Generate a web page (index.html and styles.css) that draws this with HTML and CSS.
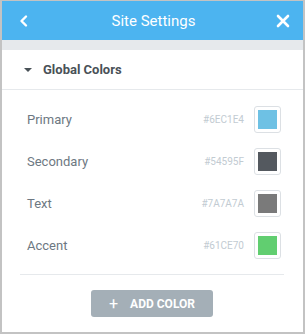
FILE: index.html
```html
<!DOCTYPE html>
<html lang="en">
<head>
	<meta charset="UTF-8">
	<title>Site Settings</title>
	<link rel="stylesheet" href="styles.css">
</head>
<body>
	<main class="panel">
		<header class="top">
			<svg class="ico" width="14" height="14" viewBox="0 0 14 14"><path d="M9 2.5 L4.5 7 L9 11.5" fill="none" stroke="#fff" stroke-width="2.4" stroke-linecap="round" stroke-linejoin="round"/></svg>
			<h1>Site Settings</h1>
			<svg class="ico" width="14" height="14" viewBox="0 0 14 14"><path d="M2 2 L12 12 M12 2 L2 12" fill="none" stroke="#fff" stroke-width="2.6" stroke-linecap="round"/></svg>
		</header>
		<div class="gap"></div>
		<section class="group">
			<div class="group-title">
				<span class="caret"></span>
				<span>Global Colors</span>
			</div>
			<ul class="colors">
				<li>
					<span class="name">Primary</span>
					<span class="hex">#6EC1E4</span>
					<span class="swatch"><i class="primary"></i></span>
				</li>
				<li>
					<span class="name">Secondary</span>
					<span class="hex">#54595F</span>
					<span class="swatch"><i class="secondary"></i></span>
				</li>
				<li>
					<span class="name">Text</span>
					<span class="hex">#7A7A7A</span>
					<span class="swatch"><i class="text"></i></span>
				</li>
				<li>
					<span class="name">Accent</span>
					<span class="hex">#61CE70</span>
					<span class="swatch"><i class="accent"></i></span>
				</li>
			</ul>
			<hr class="divider">
			<div class="actions">
				<button class="add"><span class="plus">+</span>ADD COLOR</button>
			</div>
		</section>
	</main>
</body>
</html>
```

FILE: styles.css
```css
* { box-sizing: border-box; }
html, body {
	margin: 0;
	padding: 0;
	background: #fff;
}
body {
	font-family: Roboto, "Liberation Sans", sans-serif;
}
/* panel */
.panel {
	border: 2px solid #c3c3c3;
	border-top-width: 1px;
	height: 334px;
	width: 305px;
	display: flex;
	flex-direction: column;
}
.top {
	background-color: #4cb4f0;
	height: 39px;
	display: flex;
	align-items: center;
	justify-content: space-between;
	padding: 0 13px 0 15px;
}
.top h1 {
	color: #fff;
	font-size: 15px;
	font-weight: 400;
	margin: 0;
}
.top .ico { display: block; }
.gap {
	background-color: #e6e9ec;
	height: 10px;
}
/* group */
.group {
	flex: 1;
	background: #fff;
}
.group-title {
	height: 40px;
	border-bottom: 1px solid #e6e9ec;
	display: flex;
	align-items: center;
	padding-left: 22px;
	color: #495157;
	font-size: 13px;
	font-weight: 700;
}
.caret {
	width: 0; height: 0;
	border-left: 4px solid transparent;
	border-right: 4px solid transparent;
	border-top: 4px solid #495157;
	margin-right: 11px;
}
ul.colors {
	list-style: none;
	margin: 0;
	padding: 8px 22px 0 25px;
}
ul.colors li {
	height: 42px;
	display: flex;
	align-items: center;
}
ul.colors .name {
	color: #6d7882;
	font-size: 13px;
	flex: 1;
}
ul.colors .hex {
	color: #c2cbd2;
	font-size: 10px;
	margin-right: 10px;
}
.swatch {
	width: 27px;
	height: 27px;
	border: 1px solid #dce0e4;
	border-radius: 3px;
	padding: 3px;
}
.swatch i {
	display: block;
	width: 100%;
	height: 100%;
}
.swatch i.primary   { background: #6ec1e4; }
.swatch i.secondary { background: #54595f; }
.swatch i.text      { background: #7a7a7a; }
.swatch i.accent    { background: #61ce70; }
hr.divider {
	border: none;
	border-top: 1px solid #e6e9ec;
	margin: 8px 19px 0 18px;
}
.actions {
	display: flex;
	justify-content: center;
	padding-top: 15px;
}
button.add {
	background-color: #a4afb7;
	border: none;
	border-radius: 3px;
	color: #fff;
	font-family: Roboto, "Liberation Sans", sans-serif;
	font-size: 12px;
	font-weight: 700;
	height: 27px;
	width: 122px;
	margin-left: -1px;
}
button.add .plus {
	font-size: 16px;
	font-weight: 400;
	margin-right: 12px;
	vertical-align: -1px;
}
```
